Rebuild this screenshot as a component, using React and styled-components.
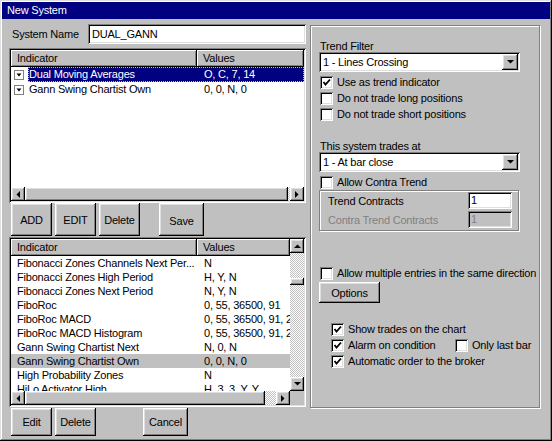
import React from "react";
import styled, { createGlobalStyle, css } from "styled-components";

const topRows = [
  { name: "Dual Moving Averages", values: "O, C, 7, 14", selected: true },
  { name: "Gann Swing Chartist Own", values: "0, 0, N, 0" },
];

const indicators = [
  { name: "Fibonacci Zones Channels Next Per...", values: "N" },
  { name: "Fibonacci Zones High Period", values: "H, Y, N" },
  { name: "Fibonacci Zones Next Period", values: "N, Y, N" },
  { name: "FiboRoc", values: "0, 55, 36500, 91" },
  { name: "FiboRoc MACD", values: "0, 55, 36500, 91, 2" },
  { name: "FiboRoc MACD Histogram", values: "0, 55, 36500, 91, 2" },
  { name: "Gann Swing Chartist Next", values: "N, 0, N" },
  { name: "Gann Swing Chartist Own", values: "0, 0, N, 0", selected: true },
  { name: "High Probability Zones", values: "N" },
  { name: "HiLo Activator High", values: "H, 3, 3, Y, Y" },
];

export default function App() {
  return (
    <>
      <GlobalStyle />
      <Window>
        <TitleBar>New System</TitleBar>
        <Body>
          <LeftCol>
            <NameRow>
              <NameLabel>System Name</NameLabel>
              <TextField>DUAL_GANN</TextField>
            </NameRow>

            <ListView $mt={4} $h={155}>
              <ListMain>
                <Header>
                  <HeaderCell>Indicator</HeaderCell>
                  <HeaderCell>Values</HeaderCell>
                </Header>
                <Rows>
                  {topRows.map((r) => (
                    <TopRow key={r.name}>
                      <IconCell>
                        <TreeIcon />
                      </IconCell>
                      <Highlight $selected={r.selected}>
                        <NameCell $pl={1}>{r.name}</NameCell>
                        <ValueCell>{r.values}</ValueCell>
                      </Highlight>
                    </TopRow>
                  ))}
                </Rows>
                <HScroll>
                  <ArrowBtn><Arrow dir="left" /></ArrowBtn>
                  <Thumb $w={263} />
                  <Track />
                  <ArrowBtn><Arrow dir="right" /></ArrowBtn>
                </HScroll>
              </ListMain>
            </ListView>

            <ButtonRow $h={33}>
              <Button $w={41}>ADD</Button>
              <Button $w={41} $ml={3}>EDIT</Button>
              <Button $w={41} $ml={3}>Delete</Button>
              <Button $w={45} $ml={19} $pt={3}>Save</Button>
            </ButtonRow>

            <ListView $mt={1} $h={170}>
              <ListMain>
                <Header>
                  <HeaderCell>Indicator</HeaderCell>
                  <HeaderCell>Values</HeaderCell>
                </Header>
                <Rows>
                  {indicators.map((r) => (
                    <IndRow key={r.name} $selected={r.selected}>
                      <NameCell $pl={6}>{r.name}</NameCell>
                      <ValueCell>{r.values}</ValueCell>
                    </IndRow>
                  ))}
                </Rows>
                <HScroll>
                  <ArrowBtn><Arrow dir="left" /></ArrowBtn>
                  <Thumb $w={240} />
                  <Track />
                  <ArrowBtn><Arrow dir="right" /></ArrowBtn>
                </HScroll>
              </ListMain>
              <VScroll>
                <ArrowBtn><Arrow dir="up" /></ArrowBtn>
                <VTrack>
                  <VThumb />
                </VTrack>
                <ArrowBtn><Arrow dir="down" /></ArrowBtn>
                <Corner />
              </VScroll>
            </ListView>

            <ButtonRow $h={28} $mt={1}>
              <Button $w={41}>Edit</Button>
              <Button $w={41} $ml={3}>Delete</Button>
              <Button $w={45} $ml={47}>Cancel</Button>
            </ButtonRow>
          </LeftCol>

          <GroupBox>
            <GroupLabel $mt={14}>Trend Filter</GroupLabel>
            <Combo>
              <span>1 - Lines Crossing</span>
              <ComboBtn><Arrow dir="down" /></ComboBtn>
            </Combo>
            <CheckRow $mt={2}>
              <Check checked /> Use as trend indicator
            </CheckRow>
            <CheckRow>
              <Check /> Do not trade long positions
            </CheckRow>
            <CheckRow>
              <Check /> Do not trade short positions
            </CheckRow>

            <GroupLabel $mt={18}>This system trades at</GroupLabel>
            <Combo>
              <span>1 - At bar close</span>
              <ComboBtn><Arrow dir="down" /></ComboBtn>
            </Combo>
            <CheckRow $mt={2}>
              <Check /> Allow Contra Trend
            </CheckRow>
            <SubGroup>
              <SubRow>
                <span>Trend Contracts</span>
                <SmallField>1</SmallField>
              </SubRow>
              <SubRow $disabled>
                <span>Contra Trend Contracts</span>
                <SmallField $disabled>1</SmallField>
              </SubRow>
            </SubGroup>

            <CheckRow $mt={34}>
              <Check /> Allow multiple entries in the same direction
            </CheckRow>
            <OptionsButton>Options</OptionsButton>

            <CheckRow $mt={18} $indent={12}>
              <Check checked /> Show trades on the chart
            </CheckRow>
            <CheckRow $indent={12}>
              <CheckItem $w={120}>
                <Check checked /> Alarm on condition
              </CheckItem>
              <CheckItem>
                <Check /> Only last bar
              </CheckItem>
            </CheckRow>
            <CheckRow $indent={12}>
              <Check checked /> Automatic order to the broker
            </CheckRow>
          </GroupBox>
        </Body>
      </Window>
    </>
  );
}

function Arrow({ dir }) {
  const pts = {
    down: "0,0 7,0 3.5,3.5",
    up: "0,4 7,4 3.5,0.5",
    left: "4,0 4,7 0.5,3.5",
    right: "0,0 0,7 3.5,3.5",
  }[dir];
  const vertical = dir === "up" || dir === "down";
  return (
    <svg width={vertical ? 7 : 4} height={vertical ? 4 : 7}>
      <polygon points={pts} fill="#000" />
    </svg>
  );
}

function TreeIcon() {
  return (
    <svg width="10" height="10">
      <rect x="0.5" y="0.5" width="9" height="9" fill="#fff" stroke="#808080" />
      <polygon points="2.5,3.5 7.5,3.5 5,6.5" fill="#000" />
    </svg>
  );
}

function Check({ checked }) {
  return (
    <CheckBox>
      {checked && (
        <svg width="9" height="9">
          <path d="M1.5 4 L3.5 6.5 L8 1.5" fill="none" stroke="#000" strokeWidth="1.8" />
        </svg>
      )}
    </CheckBox>
  );
}

// styles
const raised = css`
  box-shadow: inset -1px -1px #000, inset 1px 1px #fff, inset -2px -2px #808080,
    inset 2px 2px #dfdfdf;
`;
const sunken = css`
  box-shadow: inset 1px 1px #808080, inset -1px -1px #fff, inset 2px 2px #000,
    inset -2px -2px #dfdfdf;
`;
const etched = css`
  border: 1px solid #808080;
  box-shadow: inset 1px 1px #fff, 1px 1px #fff;
`;

const GlobalStyle = createGlobalStyle`
  body {
    margin: 0;
    background: #c0c0c0;
    font-family: "Liberation Sans", Arial, sans-serif;
    font-size: 11px;
    letter-spacing: -0.2px;
    color: #000;
  }
  * { box-sizing: border-box; }
`;

const Window = styled.div`
  width: 552px;
  height: 441px;
  padding: 2px;
  background: #c0c0c0;
  box-shadow: inset -1px -1px #000, inset 1px 1px #dfdfdf, inset -2px -2px #808080,
    inset 2px 2px #fff;
  display: flex;
  flex-direction: column;
`;

const TitleBar = styled.div`
  height: 17px;
  line-height: 17px;
  padding-left: 5px;
  background: #000080;
  color: #fff;
  font-size: 11px;
`;

const Body = styled.div`
  display: flex;
  gap: 4px;
  padding: 5px 0 0 7px;
`;

const LeftCol = styled.div`
  width: 297px;
  display: flex;
  flex-direction: column;
`;

const NameRow = styled.div`
  display: flex;
  align-items: center;
  height: 20px;
`;

const NameLabel = styled.div`
  width: 79px;
  padding-left: 3px;
`;

const TextField = styled.div`
  width: 218px;
  height: 20px;
  line-height: 20px;
  padding-left: 4px;
  background: #fff;
  ${sunken};
`;

const ListView = styled.div`
  margin-top: ${(p) => p.$mt}px;
  height: ${(p) => p.$h}px;
  padding: 2px;
  background: #fff;
  display: flex;
  ${sunken};
`;

const ListMain = styled.div`
  flex: 1;
  min-width: 0;
  display: flex;
  flex-direction: column;
`;

const Header = styled.div`
  display: grid;
  grid-template-columns: 186px 1fr;
  height: 17px;
  flex-shrink: 0;
`;

const HeaderCell = styled.div`
  background: #c0c0c0;
  line-height: 17px;
  padding-left: 6px;
  box-shadow: inset -1px -1px #000, inset 1px 1px #fff, inset -2px -2px #808080;
`;

const Rows = styled.div`
  flex: 1;
  overflow: hidden;
`;

const TopRow = styled.div`
  display: flex;
  height: 15px;
`;

const IconCell = styled.div`
  width: 17px;
  padding: 3px 0 0 3px;
`;

const Highlight = styled.div`
  flex: 1;
  display: grid;
  grid-template-columns: 169px 1fr;
  line-height: 15px;
  ${(p) =>
    p.$selected &&
    css`
      background: #000080;
      color: #fff;
      outline: 1px dotted #c8c860;
      outline-offset: -1px;
    `}
`;

const NameCell = styled.div`
  padding-left: ${(p) => p.$pl}px;
  white-space: nowrap;
  overflow: hidden;
`;

const ValueCell = styled.div`
  padding-left: 7px;
  white-space: nowrap;
  overflow: hidden;
`;

const IndRow = styled.div`
  display: grid;
  grid-template-columns: 186px 1fr;
  height: 14px;
  line-height: 14px;
  background: ${(p) => (p.$selected ? "#c0c0c0" : "transparent")};
`;

const checker = css`
  background: repeating-conic-gradient(#c0c0c0 0 25%, #fff 0 50%) 0 0 / 2px 2px;
`;

const HScroll = styled.div`
  display: flex;
  height: 14px;
  flex-shrink: 0;
`;

const ArrowBtn = styled.div`
  width: 14px;
  height: 14px;
  flex-shrink: 0;
  background: #c0c0c0;
  display: flex;
  align-items: center;
  justify-content: center;
  ${raised};
`;

const Thumb = styled.div`
  width: ${(p) => p.$w}px;
  background: #c0c0c0;
  ${raised};
`;

const Track = styled.div`
  flex: 1;
  ${checker};
`;

const VScroll = styled.div`
  width: 14px;
  display: flex;
  flex-direction: column;
`;

const VTrack = styled.div`
  flex: 1;
  padding-top: 25px;
  ${checker};
`;

const VThumb = styled.div`
  height: 7px;
  background: #c0c0c0;
  ${raised};
`;

const Corner = styled.div`
  height: 14px;
  background: #c0c0c0;
`;

const ButtonRow = styled.div`
  display: flex;
  height: ${(p) => p.$h}px;
  margin-top: ${(p) => p.$mt || 0}px;
  padding-left: 2px;
`;

const Button = styled.div`
  width: ${(p) => p.$w}px;
  margin-left: ${(p) => p.$ml || 0}px;
  padding-top: ${(p) => p.$pt || 0}px;
  background: #c0c0c0;
  display: flex;
  align-items: center;
  justify-content: center;
  ${raised};
`;

const GroupBox = styled.div`
  width: 230px;
  height: 383px;
  margin-top: 1px;
  padding-left: 8px;
  display: flex;
  flex-direction: column;
  ${etched};
`;

const GroupLabel = styled.div`
  margin-top: ${(p) => p.$mt}px;
  padding-left: 1px;
  line-height: 12px;
`;

const Combo = styled.div`
  width: 201px;
  height: 20px;
  padding: 2px 2px 2px 4px;
  background: #fff;
  display: flex;
  align-items: center;
  justify-content: space-between;
  ${sunken};
`;

const ComboBtn = styled.div`
  width: 16px;
  height: 16px;
  background: #c0c0c0;
  display: flex;
  align-items: center;
  justify-content: center;
  ${raised};
`;

const CheckRow = styled.div`
  display: flex;
  align-items: center;
  gap: 4px;
  height: 16px;
  margin-top: ${(p) => p.$mt || 0}px;
  padding-left: ${(p) => p.$indent || 1}px;
  white-space: nowrap;
`;

const CheckItem = styled.div`
  display: flex;
  align-items: center;
  gap: 4px;
  width: ${(p) => (p.$w ? `${p.$w}px` : "auto")};
`;

const CheckBox = styled.span`
  width: 13px;
  height: 13px;
  flex-shrink: 0;
  background: #fff;
  display: inline-flex;
  align-items: center;
  justify-content: center;
  ${sunken};
`;

const SubGroup = styled.div`
  width: 200px;
  padding: 1px 6px 2px 8px;
  display: flex;
  flex-direction: column;
  gap: 2px;
  ${etched};
`;

const SubRow = styled.div`
  display: flex;
  align-items: center;
  justify-content: space-between;
  height: 17px;
  color: ${(p) => (p.$disabled ? "#808080" : "#000")};
`;

const SmallField = styled.div`
  width: 44px;
  height: 17px;
  line-height: 17px;
  padding-left: 3px;
  background: ${(p) => (p.$disabled ? "#c0c0c0" : "#fff")};
  color: ${(p) => (p.$disabled ? "#808080" : "#000")};
  ${sunken};
`;

const OptionsButton = styled.div`
  width: 61px;
  height: 21px;
  margin-top: 1px;
  background: #c0c0c0;
  display: flex;
  align-items: center;
  justify-content: center;
  ${raised};
`;
